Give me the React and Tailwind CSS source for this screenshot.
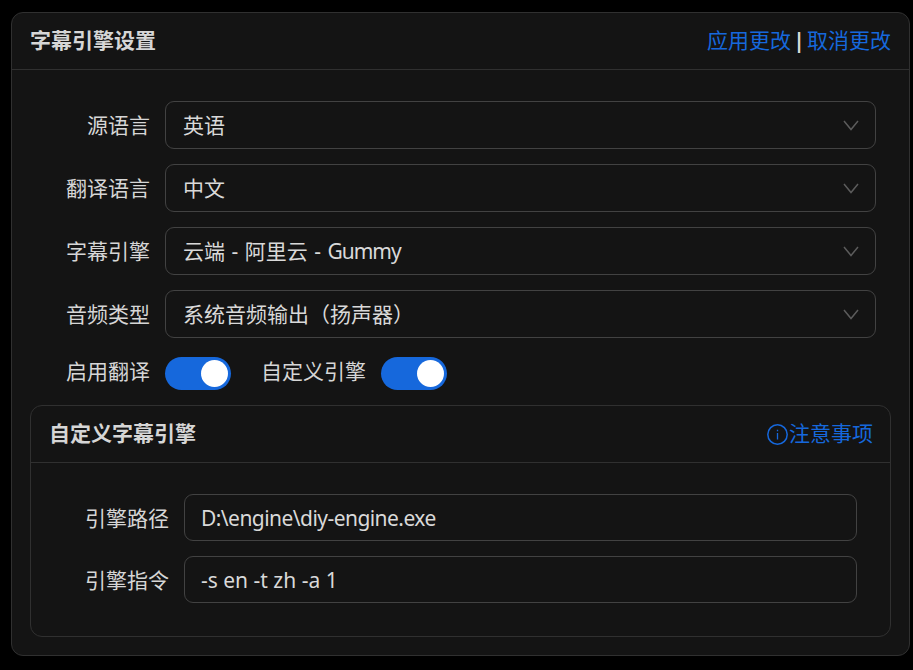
import React from "react";

const font = "font-['Noto_Sans','Noto_Sans_CJK_SC',sans-serif]";

function Label({ children }) {
  return <div className="w-[120px] shrink-0 text-right text-[21px] leading-[32px] text-[#d6d6d6]">{children}</div>;
}

function Chevron() {
  return (
    <svg width="16" height="11" viewBox="0 0 16 11" fill="none" stroke="#5c5c5c" strokeWidth="1.5">
      <path d="M1 1l7 8.5L15 1" />
    </svg>
  );
}

function SelectRow({ label, children }) {
  return (
    <div className="flex h-[48px] items-center gap-[15px] pr-[15px]">
      <Label>{label}</Label>
      <div className="flex h-[48px] flex-1 items-center justify-between rounded-[9px] border border-[#424242] pl-[17px] pr-[16px]">
        <span className="text-[21px] leading-[32px] text-[#d9d9d9]">{children}</span>
        <Chevron />
      </div>
    </div>
  );
}

function InputRow({ label, children }) {
  return (
    <div className="flex h-[47px] items-center gap-[15px] pr-[15px]">
      <Label>{label}</Label>
      <div className="flex h-[47px] flex-1 items-center rounded-[9px] border border-[#424242] pl-[16px]">
        <span className="text-[21px] leading-[32px] text-[#d9d9d9]">{children}</span>
      </div>
    </div>
  );
}

function Toggle() {
  return (
    <div className="flex h-[33px] w-[66px] shrink-0 items-center justify-end rounded-full bg-[#1668dc] pr-[3px]">
      <div className="h-[27px] w-[27px] rounded-full bg-white" />
    </div>
  );
}

export default function App() {
  return (
    <div className={`${font} h-[670px] w-[913px] bg-black pl-[11px] pr-[3px] pt-[12px]`}>
      <div className="h-[644px] rounded-[12px] border border-[#303030] bg-[#141414]">
        <div className="flex h-[57px] items-center justify-between border-b border-[#303030] px-[18px]">
          <div className="text-[21px] font-semibold text-[#d6d6d6]">字幕引擎设置</div>
          <div className="flex h-[32px] items-start text-[21px] leading-[30px] text-[#1668dc]">
            <span>应用更改</span>
            <span className="w-[16px] text-center font-bold text-[#d9d9d9]">|</span>
            <span>取消更改</span>
          </div>
        </div>
        <div className="flex flex-col px-[18px] pt-[31px]">
          <div className="flex flex-col gap-[15px]">
            <SelectRow label="源语言">英语</SelectRow>
            <SelectRow label="翻译语言">中文</SelectRow>
            <SelectRow label="字幕引擎">
              <span className="[word-spacing:1px]">云端 - 阿里云 - </span>
              <span className="tracking-[-1px]">Gummy</span>
            </SelectRow>
            <SelectRow label="音频类型">系统音频输出（扬声器）</SelectRow>
          </div>
          <div className="mt-[19px] flex h-[33px] items-start">
            <div className="flex h-[33px] items-start gap-[15px]">
              <div className="h-[33px] w-[120px] shrink-0 text-right text-[21px] leading-[28px] text-[#d6d6d6]">启用翻译</div>
              <Toggle />
            </div>
            <div className="ml-[30px] flex h-[33px] items-start gap-[15px]">
              <div className="h-[33px] text-[21px] leading-[28px] text-[#d6d6d6]">自定义引擎</div>
              <Toggle />
            </div>
          </div>
          <div className="mt-[15px] h-[232px] rounded-[12px] border border-[#303030]">
            <div className="flex h-[57px] items-center justify-between border-b border-[#303030] pl-[18px] pr-[17px]">
              <div className="text-[21px] font-semibold text-[#d6d6d6]">自定义字幕引擎</div>
              <div className="flex items-center text-[21px] text-[#1668dc]">
                <svg width="21" height="21" viewBox="0 0 21 21" fill="none" stroke="currentColor" className="mr-px">
                  <circle cx="10.5" cy="10.5" r="9.7" strokeWidth="1.5" />
                  <path d="M10.5 9v6.5M10.5 5.8v1.5" strokeWidth="1.3" />
                </svg>
                注意事项
              </div>
            </div>
            <div className="flex flex-col gap-[15px] px-[18px] pt-[31px]">
              <InputRow label="引擎路径">
                <span className="tracking-[-0.55px]">D:\engine\diy-engine.exe</span>
              </InputRow>
              <InputRow label="引擎指令">-s en -t zh -a 1</InputRow>
            </div>
          </div>
        </div>
      </div>
    </div>
  );
}
